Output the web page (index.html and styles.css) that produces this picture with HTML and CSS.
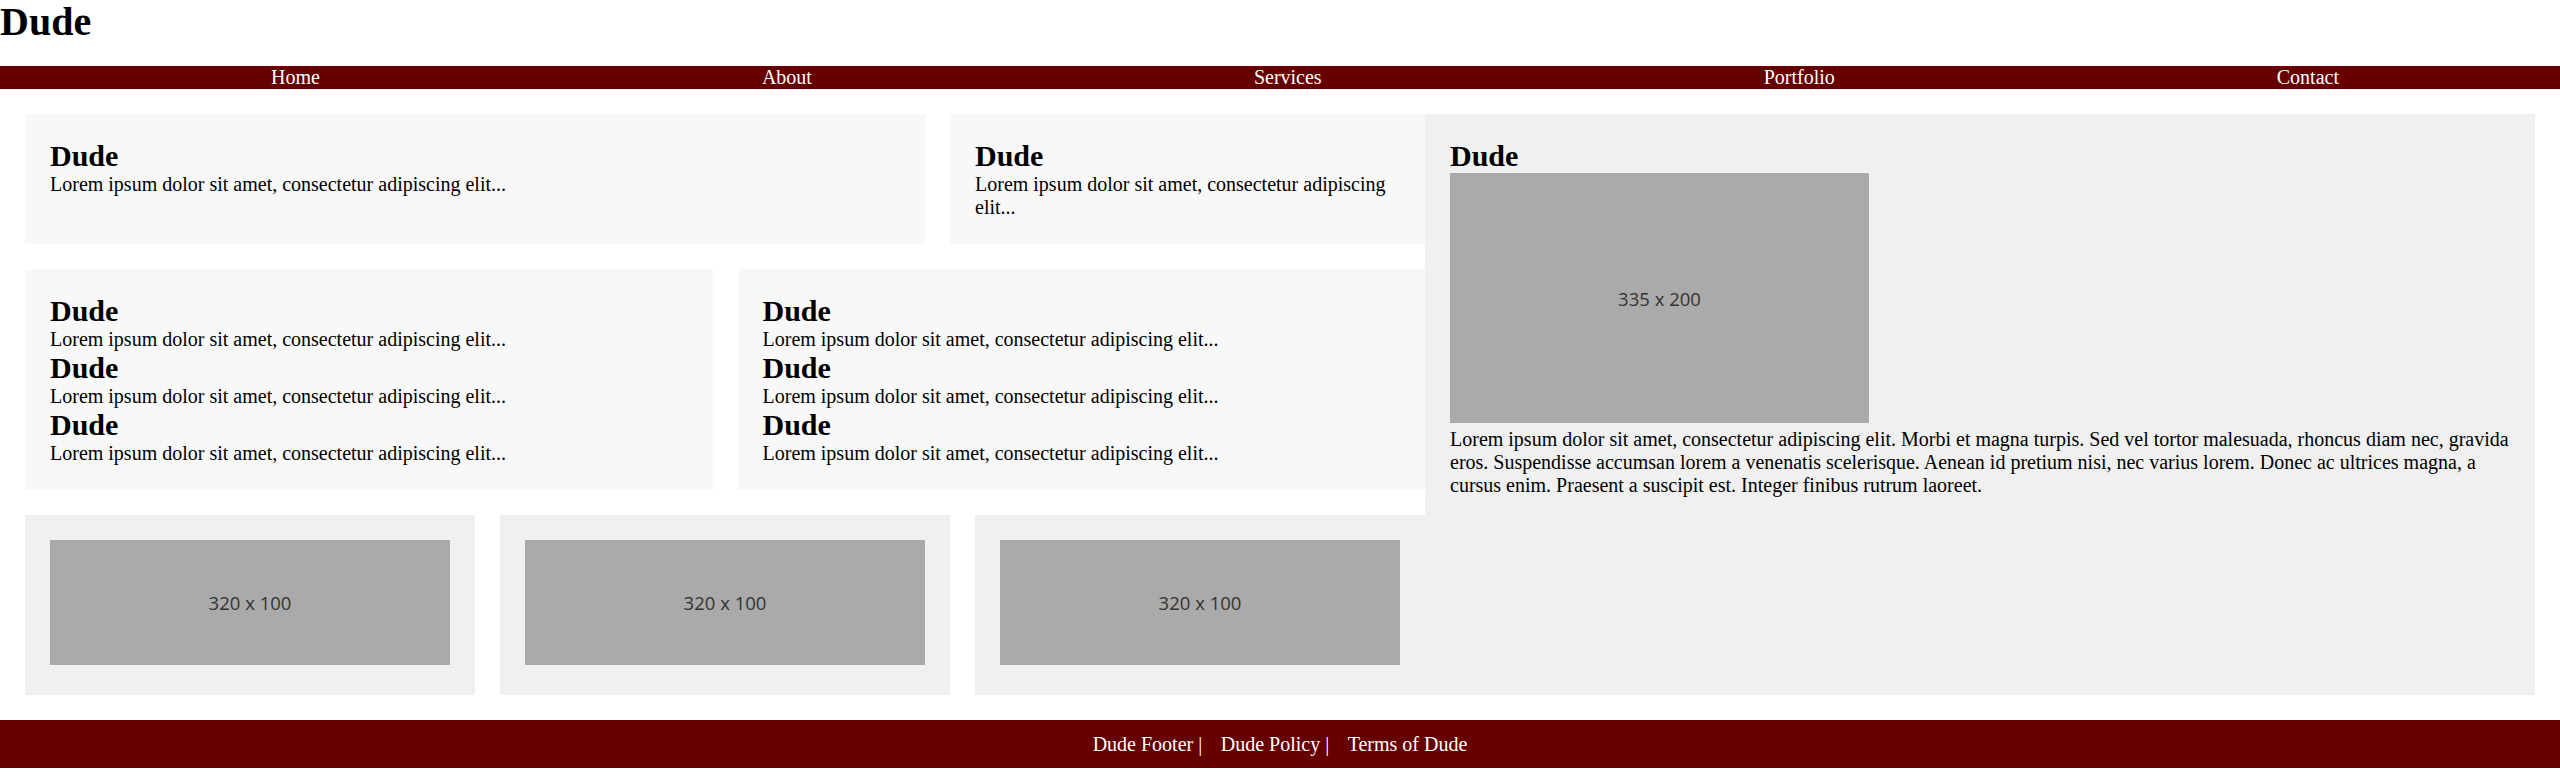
FILE: index.html
```html
<!DOCTYPE html>
<html lang="en">
<head>
<meta charset="utf-8">
<title>Dude</title>
<link rel="stylesheet" href="styles.css">
</head>
<body>
<header class="site-header">
  <h1 class="site-title">Dude</h1>
  <nav class="main-nav">
    <ul class="nav-list">
      <li><a class="nav-link" href="#">Home</a></li>
      <li><a class="nav-link" href="#">About</a></li>
      <li><a class="nav-link" href="#">Services</a></li>
      <li><a class="nav-link" href="#">Portfolio</a></li>
      <li><a class="nav-link" href="#">Contact</a></li>
    </ul>
  </nav>
</header>

<main class="content">
  <div class="left-col">
    <div class="row row-one">
      <section class="card card-light">
        <h2 class="card-title">Dude</h2>
        <p class="card-text">Lorem ipsum dolor sit amet, consectetur adipiscing elit...</p>
      </section>
      <section class="card card-light">
        <h2 class="card-title">Dude</h2>
        <p class="card-text">Lorem ipsum dolor sit amet, consectetur adipiscing elit...</p>
      </section>
    </div>
    <div class="row row-two">
      <section class="card card-light">
        <h2 class="card-title">Dude</h2>
        <p class="card-text">Lorem ipsum dolor sit amet, consectetur adipiscing elit...</p>
        <h2 class="card-title">Dude</h2>
        <p class="card-text">Lorem ipsum dolor sit amet, consectetur adipiscing elit...</p>
        <h2 class="card-title">Dude</h2>
        <p class="card-text">Lorem ipsum dolor sit amet, consectetur adipiscing elit...</p>
      </section>
      <section class="card card-light">
        <h2 class="card-title">Dude</h2>
        <p class="card-text">Lorem ipsum dolor sit amet, consectetur adipiscing elit...</p>
        <h2 class="card-title">Dude</h2>
        <p class="card-text">Lorem ipsum dolor sit amet, consectetur adipiscing elit...</p>
        <h2 class="card-title">Dude</h2>
        <p class="card-text">Lorem ipsum dolor sit amet, consectetur adipiscing elit...</p>
      </section>
    </div>
    <div class="row row-three">
      <section class="card card-grey card-media">
        <div class="placeholder ph-small">320 x 100</div>
      </section>
      <section class="card card-grey card-media">
        <div class="placeholder ph-small">320 x 100</div>
      </section>
      <section class="card card-grey card-media">
        <div class="placeholder ph-small">320 x 100</div>
      </section>
    </div>
  </div>

  <aside class="side-panel">
    <h2 class="card-title">Dude</h2>
    <div class="placeholder ph-large">335 x 200</div>
    <p class="panel-text">Lorem ipsum dolor sit amet, consectetur adipiscing elit. Morbi et magna turpis. Sed vel tortor malesuada, rhoncus diam nec, gravida eros. Suspendisse accumsan lorem a venenatis scelerisque. Aenean id pretium nisi, nec varius lorem. Donec ac ultrices magna, a cursus enim. Praesent a suscipit est. Integer finibus rutrum laoreet.</p>
  </aside>
</main>

<footer class="site-footer">
  <span class="footer-item">Dude Footer |</span>
  <span class="footer-item">Dude Policy |</span>
  <span class="footer-item">Terms of Dude</span>
</footer>
</body>
</html>
```

FILE: styles.css
```css
* {
  box-sizing: border-box;
}

html, body {
  margin: 0;
  padding: 0;
  background: #ffffff;
}

body {
  font-family: "Liberation Serif", "Times New Roman", serif;
  font-size: 20px;
  color: #000000;
}

.site-title {
  margin: 0 0 22px 0;
  font-size: 40px;
  line-height: 44px;
  font-weight: bold;
}

.main-nav {
  background: #660000;
}

.nav-list {
  display: flex;
  justify-content: space-around;
  list-style: none;
  margin: 0;
  padding: 0 0 0 50px;
}

.nav-link {
  color: #ffffff;
  text-decoration: none;
}

.content {
  display: flex;
  padding: 25px;
}

.left-col {
  width: 1400px;
  flex: none;
  display: flex;
  flex-direction: column;
  gap: 25px;
}

.row {
  display: grid;
  gap: 25px;
}

.row-one {
  grid-template-columns: 900px 1fr;
}

.row-two {
  grid-template-columns: 1fr 1fr;
}

.row-three {
  grid-template-columns: 1fr 1fr 1fr;
}

.card {
  padding: 25px;
}

.card-light {
  background: #f8f8f8;
}

.card-grey {
  background: #f0f0f0;
}

.card-media {
  padding: 25px 25px 30px 25px;
}

.card-title {
  margin: 0;
  font-size: 30px;
  font-weight: bold;
}

.card-text {
  margin: 0;
}

.placeholder {
  display: flex;
  align-items: center;
  justify-content: center;
  background: #aaaaaa;
  color: #333333;
  font-family: "Open Sans", "Noto Sans", sans-serif;
  font-size: 18.5px;
}

.ph-small {
  width: 400px;
  height: 125px;
}

.ph-large {
  width: 419px;
  height: 250px;
}

.side-panel {
  flex: 1;
  background: #f0f0f0;
  padding: 25px;
}

.panel-text {
  margin: 5px 0 0 0;
}

.site-footer {
  background: #660000;
  color: #ffffff;
  text-align: center;
  padding: 12.5px 0;
  line-height: 23px;
}

.footer-item {
  margin: 0 6.75px;
}
```
